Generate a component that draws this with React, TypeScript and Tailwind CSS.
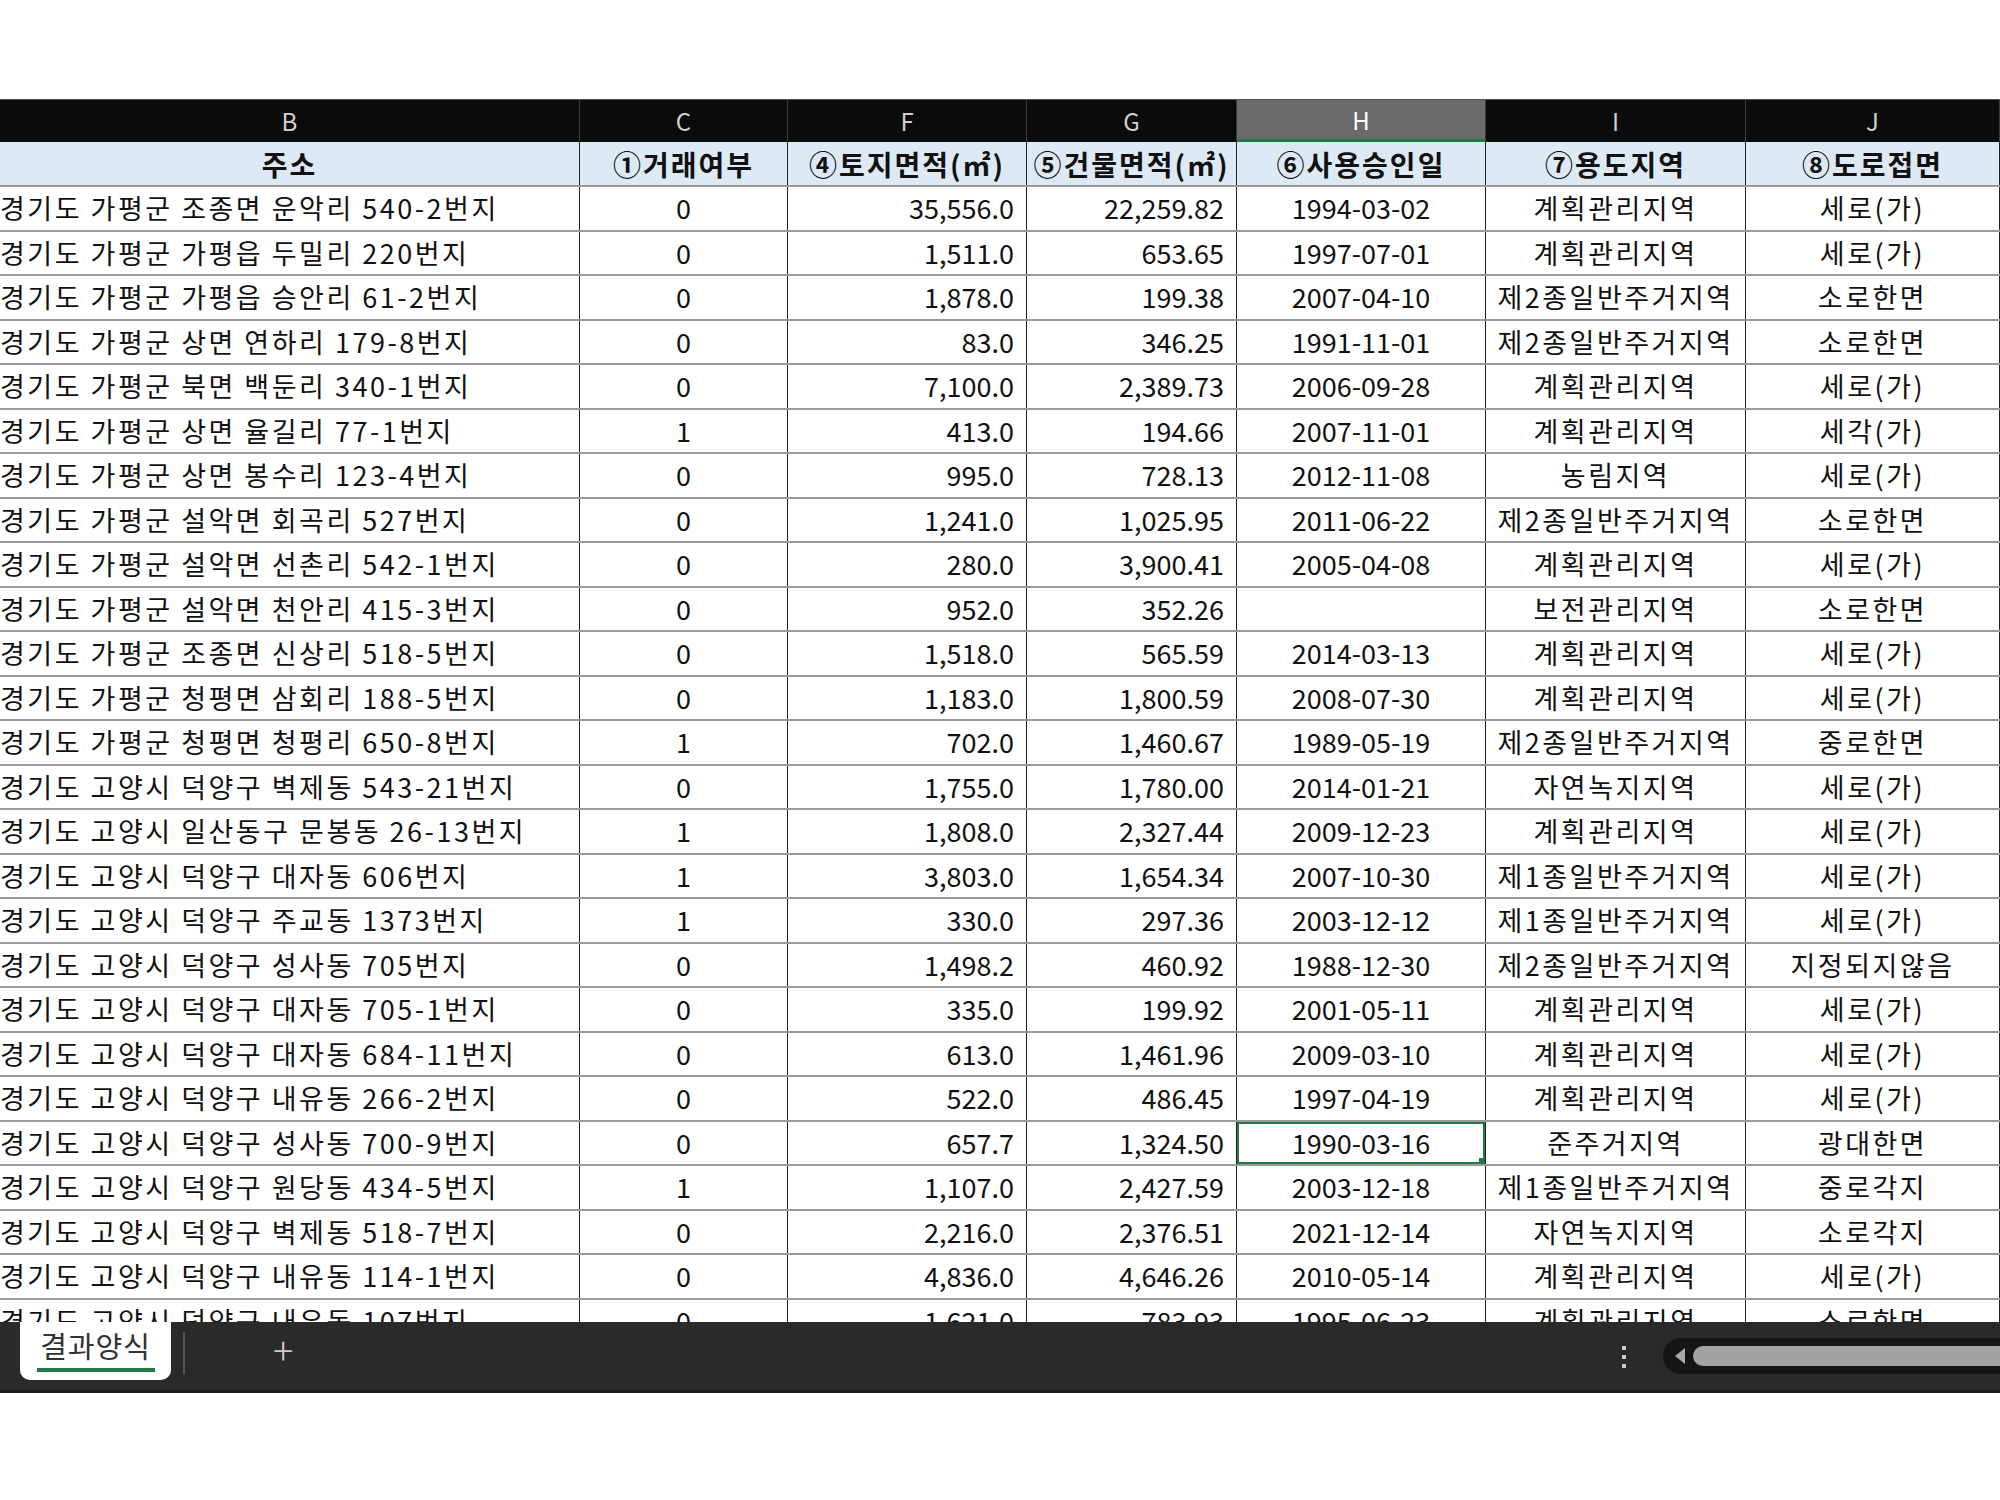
const rows: string[][] = [
["경기도 가평군 조종면 운악리 540-2번지","0","35,556.0","22,259.82","1994-03-02","계획관리지역","세로(가)"],
["경기도 가평군 가평읍 두밀리 220번지","0","1,511.0","653.65","1997-07-01","계획관리지역","세로(가)"],
["경기도 가평군 가평읍 승안리 61-2번지","0","1,878.0","199.38","2007-04-10","제2종일반주거지역","소로한면"],
["경기도 가평군 상면 연하리 179-8번지","0","83.0","346.25","1991-11-01","제2종일반주거지역","소로한면"],
["경기도 가평군 북면 백둔리 340-1번지","0","7,100.0","2,389.73","2006-09-28","계획관리지역","세로(가)"],
["경기도 가평군 상면 율길리 77-1번지","1","413.0","194.66","2007-11-01","계획관리지역","세각(가)"],
["경기도 가평군 상면 봉수리 123-4번지","0","995.0","728.13","2012-11-08","농림지역","세로(가)"],
["경기도 가평군 설악면 회곡리 527번지","0","1,241.0","1,025.95","2011-06-22","제2종일반주거지역","소로한면"],
["경기도 가평군 설악면 선촌리 542-1번지","0","280.0","3,900.41","2005-04-08","계획관리지역","세로(가)"],
["경기도 가평군 설악면 천안리 415-3번지","0","952.0","352.26","","보전관리지역","소로한면"],
["경기도 가평군 조종면 신상리 518-5번지","0","1,518.0","565.59","2014-03-13","계획관리지역","세로(가)"],
["경기도 가평군 청평면 삼회리 188-5번지","0","1,183.0","1,800.59","2008-07-30","계획관리지역","세로(가)"],
["경기도 가평군 청평면 청평리 650-8번지","1","702.0","1,460.67","1989-05-19","제2종일반주거지역","중로한면"],
["경기도 고양시 덕양구 벽제동 543-21번지","0","1,755.0","1,780.00","2014-01-21","자연녹지지역","세로(가)"],
["경기도 고양시 일산동구 문봉동 26-13번지","1","1,808.0","2,327.44","2009-12-23","계획관리지역","세로(가)"],
["경기도 고양시 덕양구 대자동 606번지","1","3,803.0","1,654.34","2007-10-30","제1종일반주거지역","세로(가)"],
["경기도 고양시 덕양구 주교동 1373번지","1","330.0","297.36","2003-12-12","제1종일반주거지역","세로(가)"],
["경기도 고양시 덕양구 성사동 705번지","0","1,498.2","460.92","1988-12-30","제2종일반주거지역","지정되지않음"],
["경기도 고양시 덕양구 대자동 705-1번지","0","335.0","199.92","2001-05-11","계획관리지역","세로(가)"],
["경기도 고양시 덕양구 대자동 684-11번지","0","613.0","1,461.96","2009-03-10","계획관리지역","세로(가)"],
["경기도 고양시 덕양구 내유동 266-2번지","0","522.0","486.45","1997-04-19","계획관리지역","세로(가)"],
["경기도 고양시 덕양구 성사동 700-9번지","0","657.7","1,324.50","1990-03-16","준주거지역","광대한면"],
["경기도 고양시 덕양구 원당동 434-5번지","1","1,107.0","2,427.59","2003-12-18","제1종일반주거지역","중로각지"],
["경기도 고양시 덕양구 벽제동 518-7번지","0","2,216.0","2,376.51","2021-12-14","자연녹지지역","소로각지"],
["경기도 고양시 덕양구 내유동 114-1번지","0","4,836.0","4,646.26","2010-05-14","계획관리지역","세로(가)"],
["경기도 고양시 덕양구 내유동 107번지","0","1,621.0","783.93","1995-06-23","계획관리지역","소로한면"],
];
const widths = [580, 208, 239, 210, 249, 260, 254];
const letters = ["B", "C", "F", "G", "H", "I", "J"];
const heads = ["주소", "①거래여부", "④토지면적(㎡)", "⑤건물면적(㎡)", "⑥사용승인일", "⑦용도지역", "⑧도로접면"];
const font = { fontFamily: '"Noto Sans CJK KR", "Noto Sans", sans-serif' };

export default function App() {
  return (
    <div className="w-[2000px] h-[1500px] bg-white overflow-hidden" style={font}>
      <div className="h-[99px]" />
      <div className="h-[1223px] overflow-hidden">
        <div className="flex h-[43px] bg-[#0b0b0b] border-t border-[#555]">
          {letters.map((l, i) => (
            <div key={l} style={{ width: widths[i] }}
              className={`shrink-0 flex items-center justify-center text-[24px] border-r border-[#3a3a3a] ${l === "H" ? "bg-[#6a6a6a] text-white border-b-[3px] border-b-[#1f7a45]" : "text-[#d0d0d0]"}`}>{l}</div>
          ))}
        </div>
        <div className="flex h-[45px] bg-[#dde9f5] border-b-2 border-[#9a9a9a]">
          {heads.map((h, i) => (
            <div key={h} style={{ width: widths[i] }}
              className="shrink-0 flex items-center justify-center text-[28px] tracking-[2px] font-bold text-[#111] border-r border-[#222] whitespace-nowrap">{h}</div>
          ))}
        </div>
        {rows.map((r, ri) => (
          <div key={ri} className="flex h-[44.5px] border-b-2 border-[#9a9a9a]">
            {r.map((c, i) => {
              const sel = ri === 21 && i === 4;
              const align = i === 0 ? "justify-start" : i === 2 || i === 3 ? "justify-end pr-[12px]" : "justify-center";
              const track = i === 0 || i === 5 || i === 6 ? "tracking-[2.5px]" : "";
              return (
                <div key={i} style={{ width: widths[i] }}
                  className={`relative shrink-0 flex items-center ${align} ${track} text-[27px] text-[#111] border-r border-[#222] whitespace-nowrap overflow-hidden`}>
                  {c}
                  {sel && (
                    <>
                      <div className="absolute inset-[-1px] border-[3px] border-[#1f7a45]" />
                      <div className="absolute right-[-2px] bottom-[-2px] w-[8px] h-[8px] bg-[#1f7a45]" />
                    </>
                  )}
                </div>
              );
            })}
          </div>
        ))}
      </div>
      <div className="h-[71px] bg-[#2a2a2a] border-b-[3px] border-[#1c1c1c] flex items-start relative">
        <div className="ml-[20px] w-[151px] h-[58px] bg-white rounded-b-[10px] flex flex-col items-center justify-center">
          <span className="text-[29px] tracking-[1px] text-[#333] leading-none">결과양식</span>
          <div className="w-[118px] h-[4px] bg-[#1f7a45] mt-[8px]" />
        </div>
        <div className="w-[2px] h-[42px] bg-[#555] ml-[12px] mt-[10px]" />
        <div className="ml-[88px] mt-[8px] text-[38px] text-[#ccc] font-light leading-none">+</div>
        <div className="absolute left-[1622px] top-[24px] flex flex-col gap-[5px]">
          <div className="w-[4px] h-[4px] bg-[#ccc]" />
          <div className="w-[4px] h-[4px] bg-[#ccc]" />
          <div className="w-[4px] h-[4px] bg-[#ccc]" />
        </div>
        <div className="absolute left-[1663px] top-[16px] w-[360px] h-[36px] bg-[#151515] rounded-full flex items-center px-[12px] gap-[8px]">
          <div className="w-0 h-0 border-y-[8px] border-y-transparent border-r-[10px] border-r-[#aaa]" />
          <div className="flex-1 h-[20px] bg-[#a3a3a3] rounded-full" />
        </div>
      </div>
    </div>
  );
}
